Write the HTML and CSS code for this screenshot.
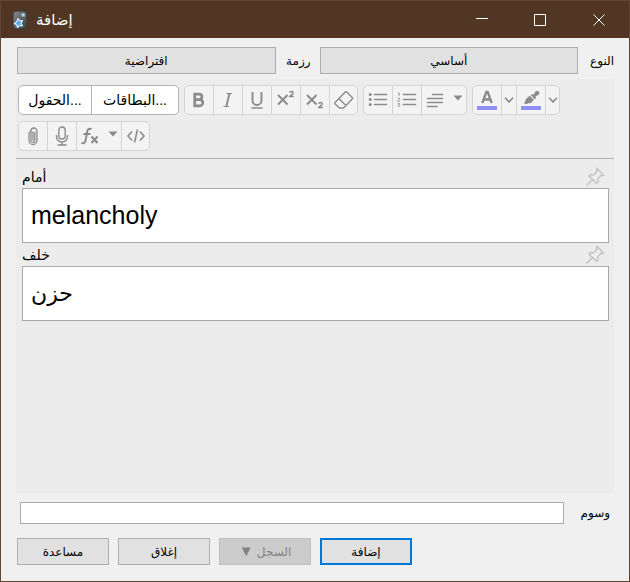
FILE: index.html
```html
<!DOCTYPE html>
<html lang="ar">
<head>
<meta charset="utf-8">
<title>إضافة</title>
<link rel="stylesheet" href="styles.css">
</head>
<body>
<div class="window">
  <header class="titlebar">
    <svg class="app-icon" viewBox="0 0 16 20" aria-hidden="true">
      <defs><linearGradient id="g" x1="0" y1="0" x2="1" y2="1"><stop offset="0" stop-color="#8a8a8a"/><stop offset="1" stop-color="#3c3c3c"/></linearGradient></defs>
      <rect x="1" y="1" width="14" height="18" rx="3" fill="url(#g)" stroke="#353535"/>
      <path d="M6 8.500l1.500 2.400 3 -.4-1.500 2.700 1.500 2.600-3-.3-2 2-.8-2.800L2.300 13.500l2.400-1.600z" fill="#4aa8ee" stroke="#d9efff" stroke-width="1.200" stroke-linejoin="round"/>
      <path d="M11 2.500l.8 1.300 1.700.1-1 1.300.4 1.700-1.600-.6-1.500.8.100-1.700-1.200-1.200 1.600-.3z" fill="#a9d7f5"/>
    </svg>
    <h1 class="title">إضافة</h1>
    <div class="caption">
      <button class="cap" type="button" aria-label="تصغير"><svg viewBox="0 0 14 14"><path d="M1 5.500h12"/></svg></button>
      <button class="cap" type="button" aria-label="تكبير"><svg viewBox="0 0 14 14"><path d="M1.500 1.500h11v11h-11z"/></svg></button>
      <button class="cap" type="button" aria-label="إنهاء"><svg viewBox="0 0 14 14"><path d="M1.500 1.500l11 11M12.500 1.500l-11 11"/></svg></button>
    </div>
  </header>

  <main class="content">
    <div class="choosers" dir="rtl">
      <label class="name" for="type">النوع</label>
      <button class="push" id="type" type="button">أساسي</button>
      <label class="name" for="deck">رزمة</label>
      <button class="push" id="deck" type="button">افتراضية</button>
    </div>

    <section class="editor">
      <div class="toolbar">
        <div class="group strong">
          <button class="text" type="button">الحقول...</button>
          <button class="text wide" type="button">البطاقات...</button>
        </div>
        <div class="group">
          <button class="tool" type="button" aria-label="عريض" disabled><svg viewBox="0 0 20 20"><path d="M5.700 4.200v11.600h5a3.100 3.100 0 0 0 0-6.200h-5 4.500a2.700 2.700 0 0 0 0-5.400z" stroke-width="2.700"/></svg></button>
          <button class="tool" type="button" aria-label="مائل" disabled><svg viewBox="0 0 20 20"><path d="M8.500 3.500h5.500M5.500 16.500H11" stroke-width="1.200"/><path d="M11.500 3.500l-3.200 13" stroke-width="1.900"/></svg></button>
          <button class="tool" type="button" aria-label="مسطر" disabled><svg viewBox="0 0 20 20"><path d="M5.500 2v8.500a4.500 4.500 0 0 0 9 0V2" stroke-width="1.900"/><path d="M4.500 18h11" stroke-width="1.700"/></svg></button>
          <button class="tool" type="button" aria-label="مرتفع" disabled><svg viewBox="0 0 20 20"><path d="M2 5l9.500 9.500M11.500 5L2 14.500" stroke-width="2"/><path d="M13.700 2.700c.5-1.700 3.500-1.400 3.400.2 0 1.200-2 2.200-3.200 3.600h3.900" stroke-width="1.500"/></svg></button>
          <button class="tool" type="button" aria-label="منخفض" disabled><svg viewBox="0 0 20 20"><path d="M2 5l9.500 9.500M11.500 5L2 14.500" stroke-width="2"/><path d="M13.700 13.700c.5-1.700 3.500-1.400 3.400.2 0 1.200-2 2.200-3.200 3.600h3.900" stroke-width="1.500"/></svg></button>
          <button class="tool" type="button" aria-label="إزالة التنسيق" disabled><svg viewBox="0 0 20 20"><path d="M1.300 12.300L11 2.300q1-1 2 0l5 5q1 1 0 2L9.500 18H5.500l-4.200-4q-.8-.8 0-1.700zM5 8.800l7.200 7" stroke-width="1.400"/></svg></button>
        </div>
        <div class="group">
          <button class="tool" type="button" aria-label="قائمة نقطية" disabled><svg viewBox="0 0 20 20"><path d="M6.500 4.500h12M6.500 9.500h12M6.500 14.500h12" stroke-width="1.500" stroke-linecap="round"/><g fill="currentColor" stroke="none"><circle cx="2.200" cy="4.500" r="1.500"/><circle cx="2.200" cy="9.500" r="1.500"/><circle cx="2.200" cy="14.500" r="1.500"/></g></svg></button>
          <button class="tool" type="button" aria-label="قائمة مرقمة" disabled><svg viewBox="0 0 20 20"><path d="M6.500 4.500h12M6.500 9.500h12M6.500 14.500h12" stroke-width="1.500" stroke-linecap="round"/><path d="M1 3.500l1-.8V6M.7 8.600c.5-.8 2-.6 1.900.3 0 .6-1.200 1.300-1.800 2.300h2M.7 13.700h2l-1.200 1.100c1.700-.2 1.700 2-.8 1.800" stroke-width=".9"/></svg></button>
          <button class="tool drop" type="button" aria-label="محاذاة" disabled><svg viewBox="0 0 20 20"><path d="M7.500 4.500h10M2.500 8.500h15M2.500 12.500h15M2.500 16.500h9.500" stroke-width="1.500" stroke-linecap="round"/></svg><svg class="caret" viewBox="0 0 10 6"><path d="M.5 .5h9L5 5.500z"/></svg></button>
        </div>
        <div class="group">
          <button class="tool" type="button" aria-label="لون النص" disabled><svg viewBox="0 0 20 20"><path d="M5.300 13L9.300 2h1.400L14.700 13M6.800 9.500h6.400" stroke-width="2.300"/><path class="swatch" d="M0 16h20v4H0z"/></svg></button>
          <button class="tool slim" type="button" aria-label="اختيار لون النص" disabled><svg viewBox="0 0 10 6"><path d="M1 .7l4 4.200L9 .7" stroke-width="1.600"/></svg></button>
          <button class="tool" type="button" aria-label="تمييز" disabled><svg viewBox="0 0 20 20"><path d="M3 13.800l2.300-5.300 3.500-2.700 4 4-2.700 3.300-3 .2-1 .7zM9.700 5l1.800-1 1.400.8 1.400-3.300a2.300 2.300 0 0 1 3.300 3.300l-3.100 1.700.5 1.500-1.200 1.400z" fill="currentColor" stroke="none"/><path class="swatch" d="M0 16h20v4H0z"/></svg></button>
          <button class="tool slim" type="button" aria-label="اختيار لون التمييز" disabled><svg viewBox="0 0 10 6"><path d="M1 .7l4 4.200L9 .7" stroke-width="1.600"/></svg></button>
        </div>
        <div class="group">
          <button class="tool" type="button" aria-label="إرفاق" disabled><svg viewBox="0 0 20 20"><path d="M11.800 5.500v9a1.900 1.900 0 0 1-3.800 0V4.500M8 5a3 3 0 0 0-2 2.500v7a4 4 0 0 0 8 0V5a3 3 0 0 0-6 0M10 5.500v9" stroke-width="1.300"/></svg></button>
          <button class="tool" type="button" aria-label="تسجيل صوت" disabled><svg viewBox="0 0 20 20"><rect x="6.800" y="1" width="6.400" height="12" rx="3.200" stroke-width="1.400"/><path d="M4.500 9v1.500a5.500 5.500 0 0 0 11 0V9M10 16v3M5.500 19h9" stroke-width="1.400"/></svg></button>
          <button class="tool drop" type="button" aria-label="معادلات" disabled><svg viewBox="0 0 20 20"><path d="M11.500 3.200c-2.800-1.300-3.900.1-4.400 3L5.700 14c-.5 3-2 3.700-4.200 2.800M3.500 8h7" stroke-width="2"/><path d="M11.500 10.500l6 6.500M17.500 10.500l-6 6.500" stroke-width="2.200"/></svg><svg class="caret" viewBox="0 0 10 6"><path d="M.5 .5h9L5 5.500z"/></svg></button>
          <button class="tool" type="button" aria-label="HTML" disabled><svg viewBox="0 0 20 20"><path d="M6 5.500L2 10l4 4.500M14 5.500l4 4.500-4 4.500M11.500 3.500l-3 13" stroke-width="1.600"/></svg></button>
        </div>
      </div>

      <div class="fields">
        <div class="field-head">
          <label for="front">أمام</label>
          <button class="pin" type="button" aria-label="تثبيت أمام"><svg viewBox="0 0 20 20"><path d="M12 1.500l6.500 6.500-1.500.8-1.200-.3-3 3.200.2 3.300-1.500 1.500-7.500-7.500L5.500 7.500l3.300.2 3-3-.4-1.500zM7.500 12.500L1.500 18.500"/></svg></button>
        </div>
        <input class="field" id="front" type="text" value="melancholy">
        <div class="field-head">
          <label for="back">خلف</label>
          <button class="pin" type="button" aria-label="تثبيت خلف"><svg viewBox="0 0 20 20"><path d="M12 1.500l6.500 6.500-1.500.8-1.200-.3-3 3.200.2 3.300-1.500 1.500-7.500-7.500L5.500 7.500l3.300.2 3-3-.4-1.500zM7.500 12.500L1.500 18.500"/></svg></button>
        </div>
        <input class="field arabic" id="back" type="text" value="حزن">
      </div>
    </section>

    <div class="tags" dir="rtl">
      <label class="name" for="tags">وسوم</label>
      <input class="tag-box" id="tags" type="text">
    </div>

    <footer class="actions">
      <button class="push" type="button">مساعدة</button>
      <button class="push" type="button">إغلاق</button>
      <button class="push" type="button" dir="rtl" disabled>السجل <span class="arrow">▼</span></button>
      <button class="push primary" type="button">إضافة</button>
    </footer>
  </main>
</div>
</body>
</html>
```
FILE: styles.css
```css
* { box-sizing: border-box; }

body {
  margin: 0;
  font: 12px/16px "Liberation Sans", "DejaVu Sans", sans-serif;
  color: #000;
}

button, input { font: inherit; color: inherit; margin: 0; }
svg { display: block; fill: none; }

.window {
  display: flex;
  flex-direction: column;
  min-height: 100vh;
  border: 1px solid #5f4733;
  background: #f0f0f0;
}

.titlebar {
  display: flex;
  align-items: center;
  height: 37px;
  padding-left: 11px;
  background: #513723;
  color: #fff;
}
.app-icon { width: 16px; height: 20px; }
.title { flex: 1; margin: 0 0 0 8px; font-size: 15px; line-height: 20px; font-weight: 400; }
.caption { display: flex; align-self: stretch; }
.cap {
  display: grid;
  place-items: center;
  width: 58px;
  padding: 0;
  border: 0;
  background: none;
}
.cap svg { width: 14px; height: 14px; stroke: #fff; }
.cap:last-child { width: 60px; }

.content {
  flex: 1;
  display: flex;
  flex-direction: column;
  padding: 9px 15px 16px;
}

.choosers { display: flex; align-items: center; padding: 0 0 0 1px; }
.choosers .push { flex: 1; }
.choosers .name { width: 44px; padding-right: 9px; text-align: right; }
.choosers .name:first-child { width: 36px; padding-right: 0; }

.name { white-space: nowrap; }

.push {
  height: 27px;
  padding: 0 4px;
  border: 1px solid #adadad;
  background: #e1e1e1;
  text-align: center;
}
.push:disabled { border-color: #bfbfbf; background: #ccc; color: #838383; }
.primary { border: 2px solid #0078d7; }
.arrow { font-size: 15px; }

.editor { flex: 1; margin-top: 5px; background: #ececec; }

.toolbar {
  display: flex;
  flex-wrap: wrap;
  gap: 6px 5px;
  padding: 6px 2px 7px;
  border-bottom: 1px solid #b3b3b3;
}
.group {
  display: flex;
  height: 30px;
  border: 1px solid #d4d4d4;
  border-radius: 5px;
  background: #f3f3f3;
  overflow: hidden;
}
.strong { border-color: #b3b3b3; background: #fff; }
.group button {
  display: flex;
  align-items: center;
  justify-content: center;
  padding: 0;
  border: 0;
  background: none;
}
.group button + button { border-left: 1px solid #d4d4d4; }
.strong button + button { border-color: #b3b3b3; }
.text { width: 72px; font-size: 14px; }
.wide { width: 87px; }
.tool { width: 29px; color: #8b8b8b; }
.tool:first-child, .tool:last-child { width: 28px; }
.tool svg { flex: none; width: 20px; height: 20px; stroke: currentColor; }
.tool.drop { width: 45px; gap: 8px; }
.tool .caret { width: 10px; height: 6px; margin-bottom: 4px; fill: currentColor; stroke: none; }
.tool.slim { width: 15px; }
.tool.slim:last-child { width: 14px; }
.slim svg { width: 10px; height: 6px; }
.swatch { fill: #9090f4; stroke: none; }

.fields { padding: 6px 5px 0 6px; }
.field-head {
  display: flex;
  align-items: center;
  justify-content: space-between;
  height: 23px;
  padding-right: 4px;
  font-size: 14px;
}
.pin { padding: 0; border: 0; background: none; }
.pin svg { width: 20px; height: 20px; stroke: #c3c3c3; stroke-width: 1.500; }
.field {
  display: block;
  width: 100%;
  height: 55px;
  padding: 0 8px;
  border: 1px solid #a9a9a9;
  background: #fff;
  font-size: 25px;
}
.arabic { font-size: 22px; }

.tags { display: flex; align-items: center; margin-top: 9px; padding: 0 4px; }
.tags .name { width: 46px; text-align: right; }
.tag-box { flex: 1; min-width: 0; height: 22px; padding: 0 4px; border: 1px solid #ababab; background: #fff; }

.actions { display: flex; gap: 9px; margin-top: 14px; padding-left: 1px; }
.actions .push { width: 92px; }
```
